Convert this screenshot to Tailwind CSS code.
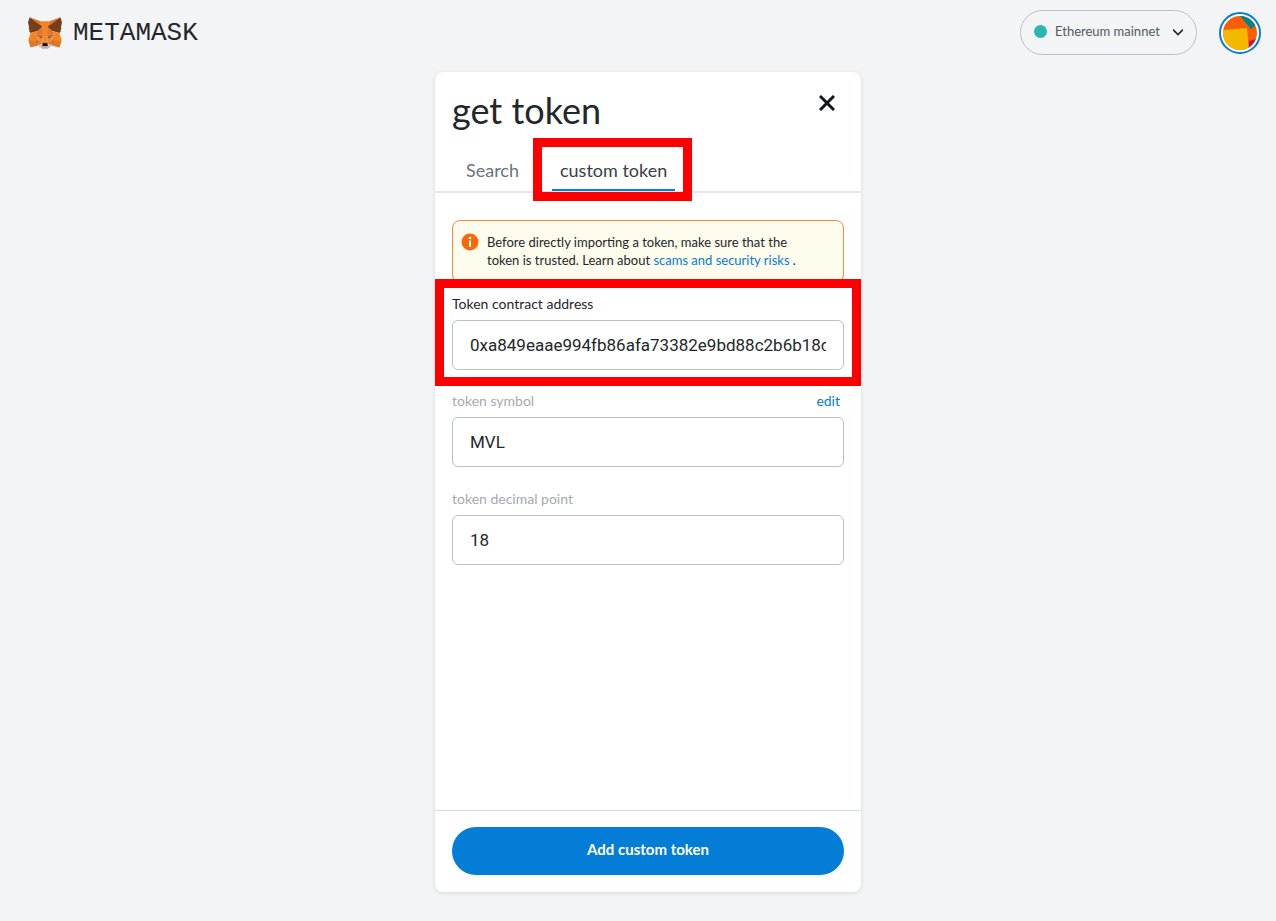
<!DOCTYPE html>
<html lang="en">
<head>
<meta charset="utf-8">
<meta name="viewport" content="width=device-width, initial-scale=1">
<title>MetaMask</title>
<script src="https://cdn.jsdelivr.net/npm/@tailwindcss/browser@4"></script>
</head>
<body class="flex min-h-screen flex-col bg-[#f2f4f6] font-[Lato,sans-serif] text-[#24272a]">
<header class="flex items-center justify-between pt-[10px] pr-[15px] pl-[27px]">
  <a href="#" class="flex items-center gap-[10px]" aria-label="MetaMask home">
    <svg class="h-9 w-9" viewBox="0 0 35.6 33" aria-hidden="true">
      <g fill="#e27625"><path d="M32.96 1 19.82 10.72 22.27 4.99Z"/><path d="M2.66 1 15.68 10.81 13.35 4.99Z"/><path d="M28.23 23.53 24.73 28.87 32.22 30.93 34.36 23.65Z"/><path d="M1.27 23.65 3.4 30.93 10.87 28.87 7.39 23.53Z"/><path d="M10.47 14.51 8.39 17.65 15.8 17.99 15.55 10.01Z"/><path d="M25.15 14.51 19.99 9.92 19.82 17.99 27.23 17.65Z"/><path d="M10.87 28.87 15.36 26.7 11.5 23.7Z"/><path d="M20.27 26.7 24.73 28.87 24.12 23.7Z"/></g>
      <g fill="#d5bfb2"><path d="M24.73 28.87 20.27 26.7 20.63 29.61 20.59 30.84Z"/><path d="M10.87 28.87 15.03 30.84 15.01 29.61 15.36 26.7Z"/></g>
      <g fill="#233447"><path d="M15.11 21.78 11.39 20.7 14.02 19.49Z"/><path d="M20.51 21.78 21.61 19.49 24.25 20.7Z"/></g>
      <g fill="#cc6228"><path d="M10.87 28.87 11.53 23.53 7.39 23.65Z"/><path d="M24.1 23.53 24.73 28.87 28.23 23.65Z"/><path d="M27.23 17.65 19.82 17.99 20.51 21.78 21.61 19.49 24.25 20.7Z"/><path d="M11.39 20.7 14.02 19.49 15.11 21.78 15.8 17.99 8.39 17.65Z"/></g>
      <g fill="#e27525"><path d="M8.39 17.65 11.5 23.7 11.39 20.7Z"/><path d="M24.25 20.7 24.12 23.7 27.23 17.65Z"/><path d="M15.8 17.99 15.11 21.78 15.98 26.27 16.17 20.36Z"/><path d="M19.82 17.99 19.46 20.35 19.64 26.27 20.51 21.78Z"/></g>
      <g fill="#f5841f"><path d="M20.51 21.78 19.64 26.27 20.27 26.7 24.12 23.7 24.25 20.7Z"/><path d="M11.39 20.7 11.5 23.7 15.36 26.7 15.98 26.27 15.11 21.78Z"/></g>
      <path fill="#c0ac9d" d="M20.59 30.84 20.63 29.61 20.29 29.33H15.33L15.01 29.61 15.03 30.84 10.87 28.87 12.33 30.06 15.28 32.11H20.33L23.29 30.06 24.73 28.87Z"/>
      <path fill="#161616" d="M20.27 26.7 19.64 26.27H15.98L15.36 26.7 15.01 29.61 15.33 29.33H20.29L20.63 29.61Z"/>
      <g fill="#763e1a"><path d="M33.52 11.35 34.62 5.99 32.96 1 20.27 10.39 25.15 14.51 32.05 16.52 33.57 14.75 32.9 14.27 33.96 13.31 33.15 12.68 34.2 11.87Z"/><path d="M1 5.99 2.12 11.35 1.41 11.87 2.47 12.68 1.67 13.31 2.72 14.27 2.05 14.75 3.57 16.52 10.47 14.51 15.36 10.39 2.66 1Z"/></g>
      <g fill="#f5841f"><path d="M32.05 16.52 25.15 14.51 27.23 17.65 24.12 23.7 28.23 23.65H34.36Z"/><path d="M10.47 14.51 3.57 16.52 1.27 23.65H7.39L11.5 23.7 8.39 17.65Z"/><path d="M19.82 17.99 20.27 10.39 22.27 4.99H13.35L15.36 10.39 15.8 17.99 15.97 20.37 15.98 26.27H19.64L19.66 20.37Z"/></g>
    </svg>
    <span class="font-['Liberation_Mono',monospace] text-[26px] leading-8">METAMASK</span>
  </a>
  <div class="flex items-center gap-[22px]">
    <button class="flex h-[45px] w-[177px] items-center rounded-full border border-[#bbc0c5] px-3 pb-0.5 text-[13px] text-[#535a61]">
      <span class="mr-2 ml-px h-[13px] w-[13px] rounded-full bg-[#29b6af]"></span>
      <span>Ethereum mainnet</span>
      <svg class="mr-px ml-auto h-[10px] w-[10px]" viewBox="0 0 12 12" fill="none" stroke="#24272a" stroke-width="2" aria-hidden="true"><path d="M0 3 6 9 12 3"/></svg>
    </button>
    <button class="h-[42px] w-[42px] rounded-full border-2 border-[#037dd6] bg-white p-[2px]" aria-label="Account">
      <svg class="h-full w-full" viewBox="0 0 34 34" aria-hidden="true">
        <defs><clipPath id="avatar"><circle cx="17" cy="17" r="17"/></clipPath></defs>
        <g clip-path="url(#avatar)"><path fill="#fb5d02" d="M0 0H34V34H0Z"/><path fill="#03818f" d="M17 0 28 13 34 8V0Z"/><path fill="#c8144e" d="M26 25 34 23V34H25Z"/><path fill="#f5b700" d="M0 14 24 12 26 34H0Z"/></g>
      </svg>
    </button>
  </div>
</header>

<main class="flex flex-1 flex-col pt-[17px] pb-[29px] pl-5">
  <section class="mx-auto flex w-full max-w-[426px] flex-1 flex-col rounded-lg bg-white shadow-[0_1px_4px_rgba(0,0,0,0.12)]">
    <div class="flex items-start justify-between px-[17px] pt-[14px]">
      <h1 class="text-[36px] leading-[48px]">get token</h1>
      <button class="mt-2 mr-2 p-px" aria-label="Close">
        <svg class="h-4 w-4" viewBox="0 0 16 16" fill="none" stroke="#141618" stroke-width="3" aria-hidden="true"><path d="M1 1 15 15M15 1 1 15"/></svg>
      </button>
    </div>

    <div class="flex gap-[25px] border-b-2 border-[#e3e5e6] px-[23px] pt-4 text-lg leading-6" role="tablist">
      <button class="px-2 pt-2 pb-[9px] text-[#6a737d]" role="tab" aria-selected="false">Search</button>
      <div class="relative">
        <button class="border-b-2 border-[#037dd6] px-2 pt-2 pb-[7px] text-[#3b4046]" role="tab" aria-selected="true">custom token</button>
        <div class="pointer-events-none absolute -top-3 -right-[17px] -bottom-[10px] -left-[19px] z-10 border-[9px] border-[#fe0000]"></div>
      </div>
    </div>

    <form class="flex flex-1 flex-col">
      <div class="flex-1 px-[17px] pt-[27px]">
        <div class="flex h-[63px] items-start gap-2 rounded-lg border border-[#f8883b] bg-[#fefcec] px-2 pt-3 text-[13px] leading-[18px]">
          <svg class="h-[18px] w-[18px] shrink-0" viewBox="0 0 18 18" aria-hidden="true"><circle cx="9" cy="9" r="8.5" fill="#f66a0a"/><circle cx="9" cy="5" r="1.3" fill="#fff"/><path stroke="#fff" stroke-width="2" d="M9 7.5V14"/></svg>
          <p>Before directly importing a token, make sure that the<br>token is trusted. Learn about <a href="#" class="text-[#037dd6]">scams and security risks</a> .</p>
        </div>
        <div class="relative pt-3">
          <label for="address" class="block text-sm leading-[18px]">Token contract address</label>
          <input id="address" value="0xa849eaae994fb86afa73382e9bd88c2b6b18d71f" class="mt-[7px] block h-[50px] w-full rounded-md border border-[#bbc0c5] bg-white px-[17px] font-[Roboto,sans-serif] text-[17px]">
          <div class="pointer-events-none absolute -right-[17px] -bottom-4 -left-[17px] -top-1 z-10 border-[9px] border-[#fe0000]"></div>
        </div>
        <div class="pt-[22px]">
          <div class="flex justify-between pr-1 text-sm leading-[18px]">
            <label for="symbol" class="text-[#a5aab0]">token symbol</label>
            <button type="button" class="text-[#037dd6]">edit</button>
          </div>
          <input id="symbol" value="MVL" class="mt-[7px] block h-[50px] w-full rounded-md border border-[#bbc0c5] bg-white px-[17px] font-[Roboto,sans-serif] text-[17px]">
        </div>
        <div class="pt-[23px]">
          <label for="decimals" class="block text-sm leading-[18px] text-[#a5aab0]">token decimal point</label>
          <input id="decimals" value="18" class="mt-[7px] block h-[50px] w-full rounded-md border border-[#bbc0c5] bg-white px-[17px] font-[Roboto,sans-serif] text-[17px]">
        </div>
      </div>
      <div class="border-t border-[#d6d9dc] px-[17px] pt-4 pb-[17px]">
        <button type="button" class="block h-12 w-full rounded-full bg-[#037dd6] pb-1 text-[15px] font-bold text-white">Add custom token</button>
      </div>
    </form>
  </section>
</main>
</body>
</html>
